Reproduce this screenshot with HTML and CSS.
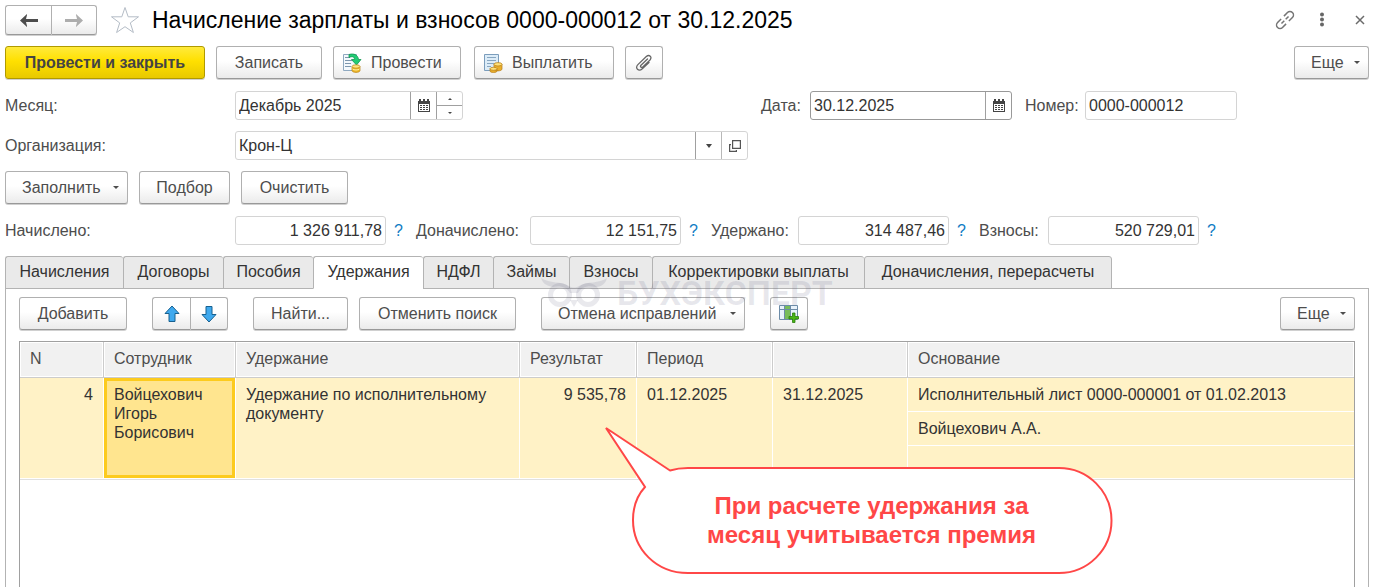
FILE: index.html
```html
<!DOCTYPE html>
<html lang="ru">
<head>
<meta charset="utf-8">
<title>Начисление зарплаты и взносов</title>
<link rel="stylesheet" href="styles.css">
</head>
<body>
<svg class="defs" width="0" height="0" aria-hidden="true">
  <symbol id="calendar" viewBox="0 0 12 13">
    <path fill="#444" fill-rule="evenodd" d="M0 2h1V0h2v2h2V0h2v2h2V0h2v2h1v11H0zM1 5v7h10V5z"/>
    <path fill="#444" d="M2 6h2v1H2zM5 6h2v1H5zM8 6h2v1H8zM2 8h2v1H2zM5 8h2v1H5zM8 8h2v1H8zM2 10h2v1H2zM5 10h2v1H5zM8 10h2v1H8z"/>
  </symbol>
</svg>
<main class="page">
  <header class="titlebar">
    <div class="pair nav">
      <button class="btn" type="button" aria-label="Назад"><svg width="18" height="13" viewBox="0 0 18 13"><path fill="#4d4d4d" d="M0 6.500L7 0v1L6 5h12v3H6l1 4v1z"/></svg></button>
      <button class="btn" type="button" aria-label="Вперед"><svg width="18" height="13" viewBox="0 0 18 13"><path fill="#adadad" d="M18 6.500L11 0v1l1 4H0v3h12l-1 4v1z"/></svg></button>
    </div>
    <button class="icon-btn star" type="button" aria-label="В избранное"><svg width="30" height="28" viewBox="0 0 30 28"><path fill="none" stroke="#b4bcc6" d="M15 1.500l3.200 9.300h10.300l-8.200 6.100 3.100 9.600-8.400-5.800-8.400 5.800 3.100-9.600-8.200-6.100h10.300z"/></svg></button>
    <h1 class="title">Начисление зарплаты и взносов 0000-000012 от 30.12.2025</h1>
    <div class="window-tools">
      <button class="icon-btn" type="button" aria-label="Ссылка"><svg width="20" height="20" viewBox="0 0 20 20"><g transform="rotate(-45 10 10)" fill="none" stroke="#757575" stroke-width="1.500"><path d="M8 6.500H3a3.500 3.500 0 0 0 0 7h5M12 6.500h5a3.500 3.500 0 0 1 0 7h-5M5 10h4M11 10h4"/></g></svg></button>
      <button class="icon-btn" type="button" aria-label="Меню"><svg width="6" height="16" viewBox="0 0 6 16"><g fill="#666"><circle cx="3" cy="2.500" r="2"/><circle cx="3" cy="7.500" r="2"/><circle cx="3" cy="12.500" r="2"/></g></svg></button>
      <button class="icon-btn" type="button" aria-label="Закрыть"><svg width="10" height="10" viewBox="0 0 10 10"><path stroke="#6b6b6b" stroke-width="1.500" d="M1 1l8 8M9 1L1 9"/></svg></button>
    </div>
  </header>

  <div class="commands main-commands">
    <button class="btn primary" type="button">Провести и закрыть</button>
    <button class="btn" type="button">Записать</button>
    <button class="btn with-icon" type="button"><svg width="20" height="20" viewBox="0 0 20 20"><path fill="#f4f9fd" stroke="#8fa9c0" d="M1.500 1.500h13v16h-13z"/><path stroke="#7d97ae" d="M3 4.500h5M3 7.500h7M3 10.500h6M3 13.500h6"/><path fill="#22cc74" stroke="#129650" stroke-width=".8" d="M7 1.500c5-1.500 9 .5 9.500 5H19l-4.500 5.500L9.500 6.500h3C12.500 3.500 10 3 7 4.500z"/><path fill="#efb92c" stroke="#b67f13" stroke-width=".7" d="M10 13.500v4c0 2.500 8 2.500 8 0v-4z"/><ellipse cx="14" cy="13.500" rx="4" ry="1.700" fill="#ffe680" stroke="#b67f13" stroke-width=".7"/><path fill="none" stroke="#fff0a0" d="M10.500 16c1.500 1.300 5.500 1.300 7 0"/></svg>Провести</button>
    <button class="btn with-icon pay" type="button"><svg width="20" height="20" viewBox="0 0 20 20"><path fill="#dcecf8" stroke="#7b9dbc" d="M1.500 1.500h14v16h-14z"/><path stroke="#87a6c1" d="M4 4.500h9M4 7.500h9M4 10.500h7M4 13.500h4"/><path fill="#e9ae2b" stroke="#b57b18" stroke-width=".7" d="M11 11v5c0 2.500 8 2.500 8 0v-5zM7 15.500V18c0 2 7 2 7 0v-2.500z"/><ellipse cx="15" cy="11.300" rx="4" ry="1.700" fill="#ffe27a" stroke="#b57b18" stroke-width=".7"/><ellipse cx="10.500" cy="15.800" rx="3.500" ry="1.500" fill="#ffe27a" stroke="#b57b18" stroke-width=".7"/></svg>Выплатить</button>
    <button class="btn square" type="button" aria-label="Файлы"><svg width="18" height="18" viewBox="0 0 18 18"><path fill="none" stroke="#666" stroke-width="1.300" stroke-linecap="round" d="M12.500 5l-6.500 6.200c-1.300 1.400.4 3 1.800 1.700l7.200-6.900c2.700-3-.8-6-3.700-3.400l-8.400 8c-3.500 3.600.8 7.500 4.400 4.200l6.700-6.300"/></svg></button>
    <button class="btn drop end" type="button">Еще</button>
  </div>

  <div class="form-row">
    <label class="label first" for="month">Месяц:</label>
    <div class="field month">
      <input id="month" type="text" value="Декабрь 2025">
      <button class="part" type="button" aria-label="Выбрать месяц"><svg width="12" height="13"><use href="#calendar"/></svg></button>
      <div class="spin"><button type="button" aria-label="Больше"><i class="tri up"></i></button><button type="button" aria-label="Меньше"><i class="tri"></i></button></div>
    </div>
    <div class="date-group">
      <label class="label" for="date">Дата:</label>
      <div class="field active date">
        <input id="date" type="text" value="30.12.2025">
        <button class="part" type="button" aria-label="Выбрать дату"><svg width="12" height="13"><use href="#calendar"/></svg></button>
      </div>
      <label class="label number" for="number">Номер:</label>
      <div class="field sum"><input id="number" type="text" value="0000-000012"></div>
    </div>
  </div>

  <div class="form-row">
    <label class="label first" for="org">Организация:</label>
    <div class="field org">
      <input id="org" type="text" value="Крон-Ц">
      <button class="part" type="button" aria-label="Выбрать"><i class="tri big"></i></button>
      <button class="part light" type="button" aria-label="Открыть"><svg width="14" height="14" viewBox="0 0 14 14"><path fill="none" stroke="#555" stroke-width="1.200" d="M4.600 1.600h7.800v7.800H4.600zM3 5.600H1.600v6.800h6.800V11"/></svg></button>
    </div>
  </div>

  <div class="commands fill-commands">
    <button class="btn drop" type="button">Заполнить</button>
    <button class="btn" type="button">Подбор</button>
    <button class="btn" type="button">Очистить</button>
  </div>

  <div class="totals">
    <label class="label" for="t1">Начислено:</label>
    <div class="field"><input id="t1" type="text" value="1 326 911,78"></div><a class="help" href="#t1">?</a>
    <label class="label" for="t2">Доначислено:</label>
    <div class="field"><input id="t2" type="text" value="12 151,75"></div><a class="help" href="#t2">?</a>
    <label class="label" for="t3">Удержано:</label>
    <div class="field"><input id="t3" type="text" value="314 487,46"></div><a class="help" href="#t3">?</a>
    <label class="label" for="t4">Взносы:</label>
    <div class="field"><input id="t4" type="text" value="520 729,01"></div><a class="help" href="#t4">?</a>
  </div>

  <section class="tabbed">
    <div class="tabs" role="tablist">
      <button class="tab" role="tab" type="button">Начисления</button>
      <button class="tab" role="tab" type="button">Договоры</button>
      <button class="tab" role="tab" type="button">Пособия</button>
      <button class="tab selected" role="tab" type="button" aria-selected="true">Удержания</button>
      <button class="tab" role="tab" type="button">НДФЛ</button>
      <button class="tab" role="tab" type="button">Займы</button>
      <button class="tab" role="tab" type="button">Взносы</button>
      <button class="tab" role="tab" type="button">Корректировки выплаты</button>
      <button class="tab" role="tab" type="button">Доначисления, перерасчеты</button>
    </div>
    <div class="panel">
      <div class="tools">
        <button class="btn" type="button">Добавить</button>
        <div class="pair moves">
          <button class="btn" type="button" aria-label="Вверх"><svg width="16" height="18" viewBox="0 0 16 18"><path fill="#3fa9ee" stroke="#17608f" stroke-linejoin="round" d="M8 1l7 7.500h-4V16.500H5V8.500H1z"/></svg></button>
          <button class="btn" type="button" aria-label="Вниз"><svg width="16" height="18" viewBox="0 0 16 18"><path fill="#3fa9ee" stroke="#17608f" stroke-linejoin="round" d="M8 17L1 9.500h4V1.500h6v8h4z"/></svg></button>
        </div>
        <div class="search">
          <button class="btn" type="button">Найти...</button>
          <button class="btn" type="button">Отменить поиск</button>
        </div>
        <button class="btn drop" type="button">Отмена исправлений</button>
        <button class="btn square" type="button" aria-label="Добавить колонку"><svg width="22" height="20" viewBox="0 0 22 20"><path fill="#e8f2fa" stroke="#6d8ca8" d="M1.500 1.500h18v14h-18z"/><path fill="#78bd5a" d="M7 2h5v13H7z"/><path fill="none" stroke="#6d8ca8" d="M1.500 5.500h18M6.500 1.500v14M12.500 1.500v14"/><path fill="#48b516" stroke="#2a7d0a" stroke-width=".8" d="M14.500 9h2.500v3.500h3.500V15H17v3.500h-2.500V15H11v-2.500h3.500z"/></svg></button>
        <button class="btn drop end" type="button">Еще</button>
      </div>
      <div class="grid">
        <table>
          <colgroup><col class="c-n"><col class="c-emp"><col class="c-ded"><col class="c-res"><col class="c-from"><col class="c-to"><col></colgroup>
          <thead><tr><th>N</th><th>Сотрудник</th><th>Удержание</th><th>Результат</th><th>Период</th><th></th><th>Основание</th></tr></thead>
          <tbody>
            <tr><td class="num" rowspan="3">4</td><td class="current" rowspan="3">Войцехович Игорь Борисович</td><td rowspan="3">Удержание по исполнительному документу</td><td class="num" rowspan="3">9 535,78</td><td rowspan="3">01.12.2025</td><td rowspan="3">31.12.2025</td><td>Исполнительный лист 0000-000001 от 01.02.2013</td></tr>
            <tr><td>Войцехович А.А.</td></tr>
            <tr><td class="blank"></td></tr>
          </tbody>
        </table>
      </div>
    </div>
    <div class="watermark" aria-hidden="true">
      <svg width="70" height="30" viewBox="0 0 70 30"><g fill="none" stroke="currentColor" stroke-width="5"><circle cx="21" cy="17" r="9.500"/><circle cx="49" cy="17" r="9.500"/></g><path fill="currentColor" d="M2 0c9 6 20 3 28 8 4 2 6 2 10 0 8-5 20-2 28-8-2 8-8 9-12 9-8-2-14 1-17 6h-8C28 10 22 7 14 9 10 8 4 7 2 0zM31 22h8l-4 7z"/></svg>
      <span>БУХЭКСПЕРТ</span>
    </div>
  </section>

  <aside class="callout">
    <svg width="510" height="150" viewBox="0 0 510 150" aria-hidden="true"><path fill="#fff" stroke="#ff4747" stroke-width="2" d="M2 2L66 44.500Q74 42 84 42H455A52.500 52.500 0 0 1 455 147H84C52 147 29 123 29 94Q29 74 41 61z"/></svg>
    <p>При расчете удержания за<br>месяц учитывается премия</p>
  </aside>
</main>
</body>
</html>
```
FILE: styles.css
```css
* { box-sizing: border-box; }

body {
  margin: 0;
  background: #fff;
  color: #333;
  font: 16px/19px "Liberation Sans", Arial, sans-serif;
}

button, input { font: inherit; color: inherit; margin: 0; }
.defs { position: absolute; }

.page {
  position: relative;
  display: flex;
  flex-direction: column;
  min-height: 100vh;
  padding: 5px 5px 0;
  overflow: hidden;
}

.titlebar { display: flex; align-items: center; height: 30px; margin-bottom: 11px; }
.title { margin: 0 0 0 12px; font-size: 23px; line-height: 30px; font-weight: 400; color: #000; white-space: nowrap; }
.icon-btn { display: flex; padding: 0; border: 0; background: none; }
.star { margin-left: 13px; }
.window-tools { display: flex; align-items: center; gap: 24px; margin-left: auto; padding-right: 4px; }
.window-tools .icon-btn:last-child { margin-left: 6px; }

.btn {
  display: flex;
  align-items: center;
  justify-content: center;
  height: 33px;
  padding: 0;
  border: 1px solid #b0b0b0;
  border-bottom-color: #999;
  border-radius: 3px;
  background: linear-gradient(#fff 45%, #ebebeb);
  box-shadow: 0 1px 0 #d0d0d0;
  color: #4d4d4d;
  white-space: nowrap;
}
.primary {
  border-color: #b09a00;
  background: linear-gradient(#ffea3c, #ffe000 45%, #e8c900);
  font-weight: 700;
  color: #444;
}
.with-icon { justify-content: flex-start; gap: 9px; padding-left: 8px; }
.drop { justify-content: space-between; padding: 0 8px 0 16px; }
.drop::after { content: ""; border: 3px solid transparent; border-top-color: #4d4d4d; border-bottom: 0; }
.end { width: 75px; justify-self: end; }

.pair { display: grid; grid-template-columns: 1fr 1fr; }
.pair .btn:first-child { border-radius: 3px 0 0 3px; border-right: 0; }
.pair .btn:last-child { border-radius: 0 3px 3px 0; }
.nav { width: 92px; }
.nav .btn { height: 30px; }

.commands { display: grid; gap: 11px; margin-bottom: 12px; }
.main-commands { grid-template-columns: 200px 106px 130px 140px 38px 1fr; }
.main-commands .with-icon:not(.pay) { margin-right: 2px; }
.fill-commands { grid-template-columns: 123px 91px 107px; }

.form-row { display: flex; align-items: center; margin-bottom: 11px; }
.label { color: #4d4d4d; white-space: nowrap; }
.first { width: 230px; }
.field {
  display: flex;
  height: 29px;
  border: 1px solid #d4d4d4;
  border-radius: 3px;
  background: #fff;
}
.field input { flex: 1; width: 0; min-width: 0; padding: 0 3px; border: 0; outline: 0; background: none; }
.active { border-color: #999; }
.part { display: flex; align-items: center; justify-content: center; width: 26px; padding: 0; border: 0; border-left: 1px solid #a0a0a0; background: none; }
.light { border-left-color: #b8b8b8; }
.spin { display: flex; flex-direction: column; width: 26px; border-left: 1px solid #a0a0a0; }
.spin button { display: flex; flex: 1; align-items: center; justify-content: center; padding: 0; border: 0; background: none; }
.spin button + button { border-top: 1px solid #a0a0a0; }
.tri { border: 2px solid transparent; border-top-color: #444; border-bottom: 0; }
.up { transform: rotate(180deg); }
.big { border-width: 4px 3px 0; }

.month { width: 228px; }
.date { width: 202px; }
.sum { width: 152px; }
.org { width: 513px; }
.date-group { display: grid; grid-template-columns: 49px 202px 73px 152px; align-items: center; margin-left: 298px; }
.number { padding-left: 13px; }

.totals {
  display: grid;
  grid-template-columns: 230px 151px 30px 114px 151px 30px 87px 151px 30px 69px 151px 30px;
  align-items: center;
  margin-bottom: 11px;
}
.totals input { text-align: right; }
.help { padding-left: 8px; color: #0f7cc4; text-decoration: none; }

.tabbed { position: relative; display: flex; flex: 1; flex-direction: column; }
.tabs { z-index: 1; display: grid; grid-template-columns: 118px 100px 90px 110px 70px 76px 83px 212px 248px; }
.tab {
  height: 33px;
  padding: 0 0 2px;
  border: 1px solid #b3b3b3;
  border-right: 0;
  border-radius: 3px 3px 0 0;
  background: #eaeaea;
  color: #333;
  white-space: nowrap;
}
.tab:last-child { border-right: 1px solid #b3b3b3; }
.selected { background: #fff; border-bottom-color: #fff; }

.panel {
  display: flex;
  flex: 1;
  flex-direction: column;
  margin-top: -1px;
  padding: 8px 13px 0;
  border: 1px solid #b3b3b3;
  border-bottom: 0;
}
.tools { display: grid; grid-template-columns: 108px 76px 263px 204px 38px 1fr; gap: 25px; margin-bottom: 11px; }
.search { display: grid; grid-template-columns: 95px 157px; gap: 11px; }

.grid { flex: 1; border: 1px solid #a0a0a0; border-bottom: 0; }
table { width: 100%; table-layout: fixed; border-collapse: separate; border-spacing: 0; border-bottom: 1px solid #e0e0e0; }
.c-n { width: 84px; }
.c-emp { width: 132px; }
.c-ded { width: 284px; }
.c-res { width: 117px; }
.c-from { width: 136px; }
.c-to { width: 135px; }
th {
  height: 36px;
  padding: 0 10px 2px;
  border-right: 1px solid #ccc;
  border-bottom: 1px solid #ccc;
  background: #f1f1f1;
  box-shadow: inset 0 0 0 1px #fff;
  color: #4d4d4d;
  font-weight: 400;
  text-align: left;
}
th:last-child { border-right: 0; }
td {
  height: 34px;
  padding: 7px 10px;
  border-right: 1px solid #fff;
  border-bottom: 1px solid #fff;
  background: #fff2c6;
  vertical-align: top;
}
td:last-child:not([rowspan]) { border-right: 0; }
td.blank { height: 33px; }
.num { text-align: right; }
.current { background: #ffe58f; box-shadow: inset 0 0 0 3px #fccb1e; }

.watermark {
  position: absolute;
  z-index: 2;
  top: 19px;
  left: 534px;
  display: flex;
  align-items: center;
  gap: 8px;
  color: rgba(70, 70, 110, 0.12);
  font: 700 34px/36px Roboto, sans-serif;
  pointer-events: none;
}

.callout { position: absolute; z-index: 3; top: 426px; left: 604px; }
.callout svg { display: block; }
.callout p {
  position: absolute;
  top: 65px;
  left: 28px;
  width: 479px;
  margin: 0;
  color: #ff4747;
  font-size: 24px;
  line-height: 29px;
  font-weight: 700;
  text-align: center;
}
```
